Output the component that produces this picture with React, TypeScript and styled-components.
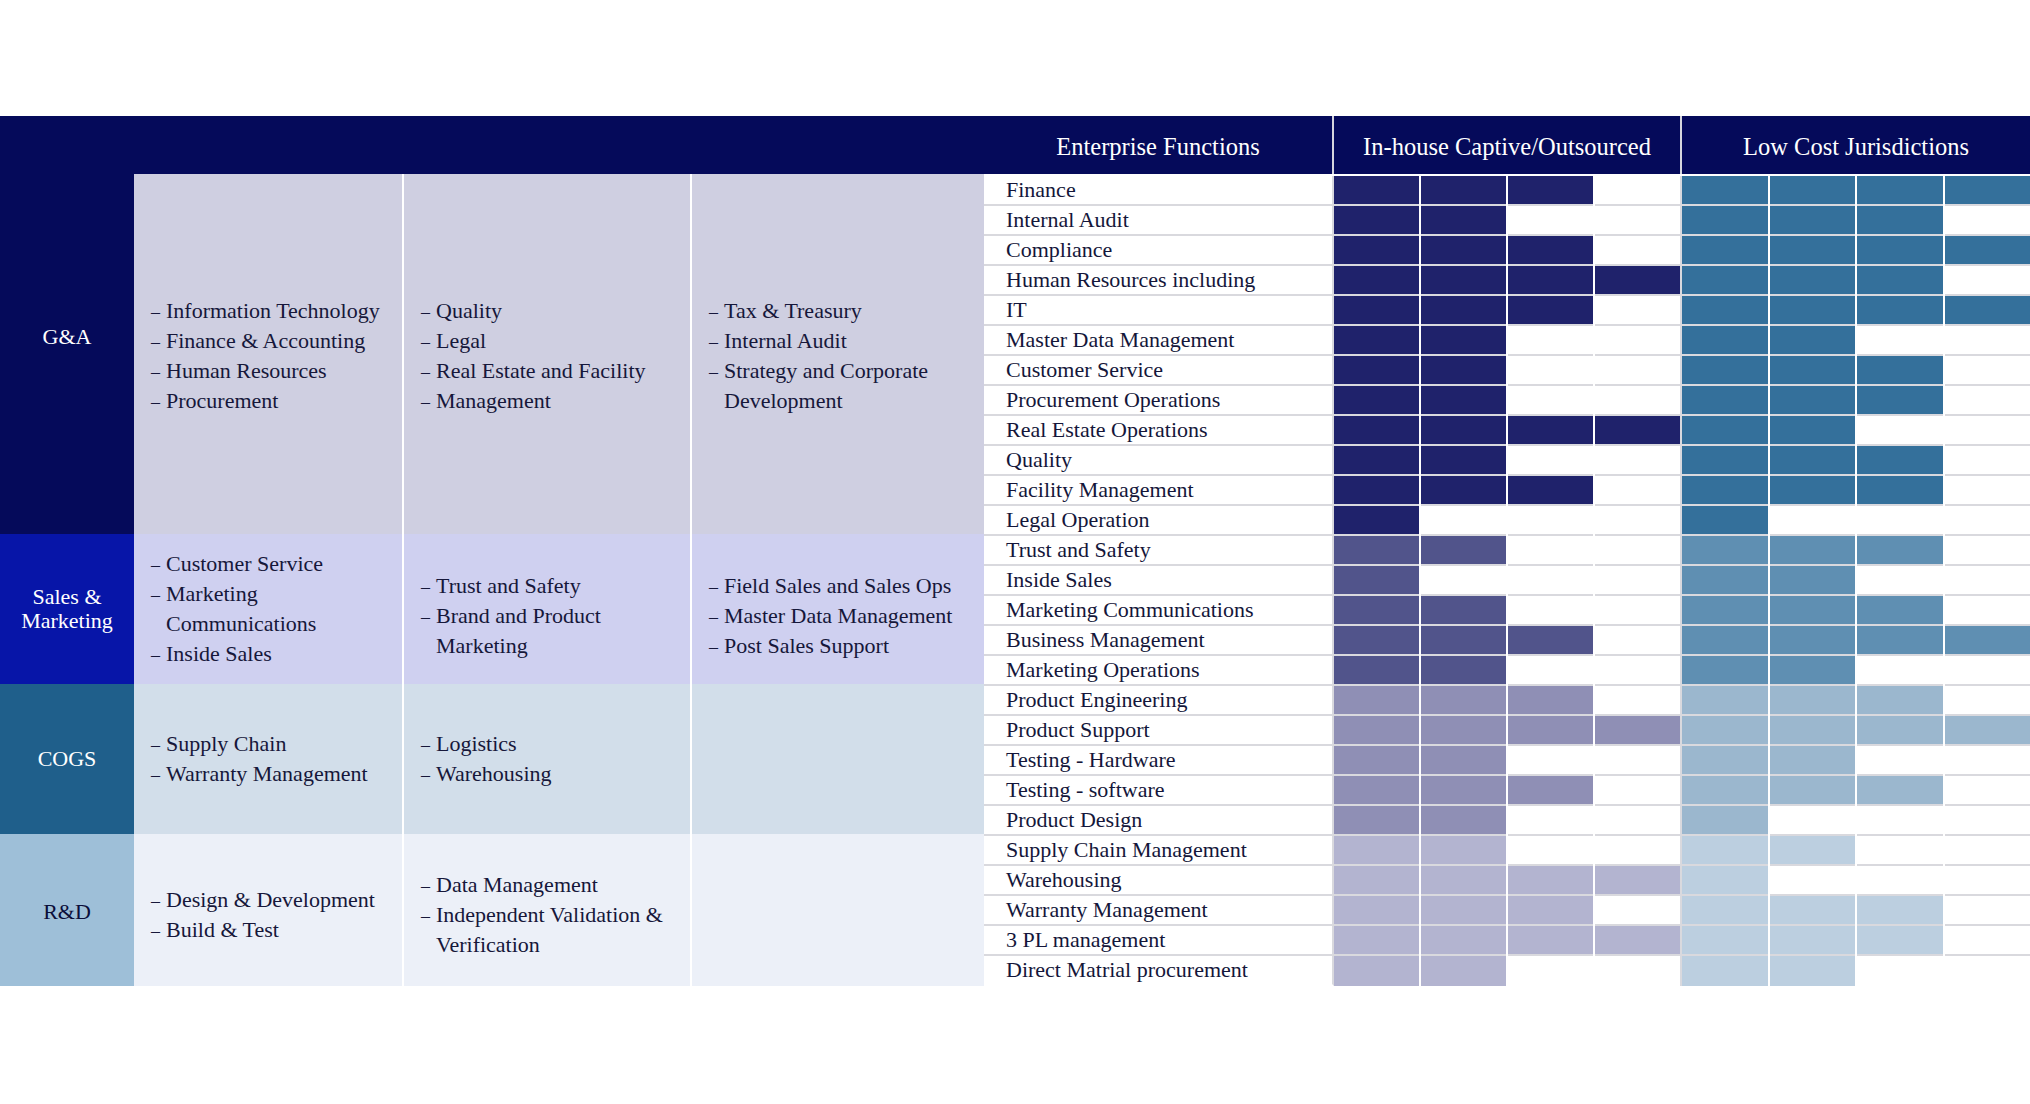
import React from "react";
import styled, { createGlobalStyle } from "styled-components";

const GlobalStyle = createGlobalStyle`
  html, body { margin: 0; padding: 0; background: #ffffff; }
  body { font-family: "Liberation Serif", "Times New Roman", serif; }
  #root { width: 2030px; min-height: 1104px; background: #ffffff; }
  * { box-sizing: border-box; }
`;

type Tier = "ga" | "sm" | "cogs" | "rd";

const NAVY = "#050a5a";
const LINE = "#d9d9de";

const palette: Record<Tier, { label: string; labelText: string; desc: string; inhouse: string; lowcost: string }> = {
  ga: { label: NAVY, labelText: "#ffffff", desc: "#cfcfe1", inhouse: "#1f226b", lowcost: "#34709b" },
  sm: { label: "#0715a8", labelText: "#ffffff", desc: "#cfd0f0", inhouse: "#51548b", lowcost: "#5f8fb2" },
  cogs: { label: "#1f5f8b", labelText: "#ffffff", desc: "#d2deea", inhouse: "#8f8fb5", lowcost: "#9bb7ce" },
  rd: { label: "#9ebfd8", labelText: "#0b0e3a", desc: "#ecf0f8", inhouse: "#b3b4d0", lowcost: "#bccfe0" },
};

interface Section {
  tier: Tier;
  label: string;
  labelShift: number;
  descs: { items: string[]; shift: number }[];
}

const sections: Section[] = [
  {
    tier: "ga",
    label: "G&A",
    labelShift: 24,
    descs: [
      { items: ["Information Technology", "Finance & Accounting", "Human Resources", "Procurement"], shift: 4 },
      { items: ["Quality", "Legal", "Real Estate and Facility", "Management"], shift: 4 },
      { items: ["Tax & Treasury", "Internal Audit", "Strategy and Corporate\nDevelopment"], shift: 4 },
    ],
  },
  {
    tier: "sm",
    label: "Sales &\nMarketing",
    labelShift: 0,
    descs: [
      { items: ["Customer Service", "Marketing\nCommunications", "Inside Sales"], shift: 0 },
      { items: ["Trust and Safety", "Brand and Product\nMarketing"], shift: 14 },
      { items: ["Field Sales and Sales Ops", "Master Data Management", "Post Sales Support"], shift: 14 },
    ],
  },
  {
    tier: "cogs",
    label: "COGS",
    labelShift: 0,
    descs: [
      { items: ["Supply Chain", "Warranty Management"], shift: 0 },
      { items: ["Logistics", "Warehousing"], shift: 0 },
      { items: [], shift: 0 },
    ],
  },
  {
    tier: "rd",
    label: "R&D",
    labelShift: 4,
    descs: [
      { items: ["Design & Development", "Build & Test"], shift: 10 },
      { items: ["Data Management", "Independent Validation &\nVerification"], shift: 10 },
      { items: [], shift: 0 },
    ],
  },
];

const rows: [string, Tier, number, number][] = [
  ["Finance", "ga", 3, 4],
  ["Internal Audit", "ga", 2, 3],
  ["Compliance", "ga", 3, 4],
  ["Human Resources including", "ga", 4, 3],
  ["IT", "ga", 3, 4],
  ["Master Data Management", "ga", 2, 2],
  ["Customer Service", "ga", 2, 3],
  ["Procurement Operations", "ga", 2, 3],
  ["Real Estate Operations", "ga", 4, 2],
  ["Quality", "ga", 2, 3],
  ["Facility Management", "ga", 3, 3],
  ["Legal Operation", "ga", 1, 1],
  ["Trust and Safety", "sm", 2, 3],
  ["Inside Sales", "sm", 1, 2],
  ["Marketing Communications", "sm", 2, 3],
  ["Business Management", "sm", 3, 4],
  ["Marketing Operations", "sm", 2, 2],
  ["Product Engineering", "cogs", 3, 3],
  ["Product Support", "cogs", 4, 4],
  ["Testing - Hardware", "cogs", 2, 2],
  ["Testing - software", "cogs", 3, 3],
  ["Product Design", "cogs", 2, 1],
  ["Supply Chain Management", "rd", 2, 2],
  ["Warehousing", "rd", 4, 1],
  ["Warranty Management", "rd", 3, 3],
  ["3 PL management", "rd", 4, 3],
  ["Direct Matrial procurement", "rd", 2, 2],
];

const Page = styled.div`
  width: 2030px;
  padding-top: 116px;
  display: flex;
  align-items: flex-start;
`;

const LeftPanel = styled.div`
  width: 984px;
  display: grid;
  grid-template-columns: 134px 270px 288px 292px;
  grid-template-rows: 58px 360px 150px 150px 152px;
`;

const SectionLabel = styled.div<{ $tier: Tier; $span: number; $shift: number }>`
  grid-row: span ${(p) => p.$span};
  display: flex;
  align-items: center;
  justify-content: center;
  padding-top: ${(p) => p.$shift}px;
  background: ${(p) => palette[p.$tier].label};
  color: ${(p) => palette[p.$tier].labelText};
  font-size: 22px;
  line-height: 24px;
  text-align: center;
  white-space: pre-line;
`;

const HeaderFill = styled.div`
  grid-column: span 3;
  background: ${NAVY};
`;

const DescCell = styled.div<{ $tier: Tier; $divider: boolean; $shift: number }>`
  background: ${(p) => palette[p.$tier].desc};
  border-right: ${(p) => (p.$divider ? "2px solid #ffffff" : "none")};
  display: flex;
  align-items: center;
  padding: ${(p) => p.$shift}px 8px 0 17px;
`;

const DescList = styled.ul`
  list-style: none;
  margin: 0;
  padding: 0;
  font-size: 22px;
  line-height: 30px;
  color: #16173a;
`;

const DescItem = styled.li`
  display: flex;
  align-items: baseline;
  white-space: pre-line;
`;

const Dash = styled.span`
  flex: none;
  width: 15px;
  font-size: 18px;
  line-height: 20px;
`;

const RightPanel = styled.div`
  width: 1046px;
  display: flex;
  flex-direction: column;
`;

const HeaderRow = styled.div`
  display: grid;
  grid-template-columns: 350px 348px 348px;
  height: 58px;
  background: ${NAVY};
  margin-bottom: 2px;
`;

const HeaderCell = styled.div<{ $divider: boolean }>`
  display: flex;
  align-items: center;
  justify-content: center;
  padding-top: 3px;
  color: #ffffff;
  font-size: 24.5px;
  white-space: nowrap;
  border-right: ${(p) => (p.$divider ? "2px solid #d6d6de" : "none")};
`;

const MatrixRow = styled.div`
  display: grid;
  grid-template-columns: 350px 348px 348px;
  height: 30px;

  &:last-child > * {
    border-bottom-color: transparent;
  }
  &:last-child > * > * {
    border-bottom: none;
  }
`;

const FunctionName = styled.div`
  border-right: 2px solid ${LINE};
  border-bottom: 2px solid ${LINE};
  padding-left: 22px;
  font-size: 22px;
  line-height: 28px;
  color: #14163a;
  white-space: nowrap;
  background: #ffffff;
`;

const Group = styled.div<{ $divider: boolean }>`
  display: grid;
  grid-template-columns: repeat(4, 1fr);
  column-gap: 2px;
  border-right: ${(p) => (p.$divider ? `2px solid ${LINE}` : "none")};
`;

const Cell = styled.div<{ $fill: string | null }>`
  background: ${(p) => p.$fill ?? "#ffffff"};
  border-bottom: 2px solid ${LINE};
`;

const Cells: React.FC<{ count: number; color: string }> = ({ count, color }) => (
  <>
    {[0, 1, 2, 3].map((i) => (
      <Cell key={i} $fill={i < count ? color : null} />
    ))}
  </>
);

export default function App() {
  return (
    <>
      <GlobalStyle />
      <Page>
        <LeftPanel>
          {sections.map((s, si) => (
            <React.Fragment key={s.tier}>
              <SectionLabel $tier={s.tier} $span={si === 0 ? 2 : 1} $shift={s.labelShift}>
                {s.label}
              </SectionLabel>
              {si === 0 && <HeaderFill />}
              {s.descs.map((d, di) => (
                <DescCell key={di} $tier={s.tier} $divider={di < 2} $shift={d.shift}>
                  {d.items.length > 0 && (
                    <DescList>
                      {d.items.map((item) => (
                        <DescItem key={item}>
                          <Dash>–</Dash>
                          <span>{item}</span>
                        </DescItem>
                      ))}
                    </DescList>
                  )}
                </DescCell>
              ))}
            </React.Fragment>
          ))}
        </LeftPanel>
        <RightPanel>
          <HeaderRow>
            <HeaderCell $divider>Enterprise Functions</HeaderCell>
            <HeaderCell $divider>In-house Captive/Outsourced</HeaderCell>
            <HeaderCell $divider={false}>Low Cost Jurisdictions</HeaderCell>
          </HeaderRow>
          {rows.map(([name, tier, ih, lc]) => (
            <MatrixRow key={name}>
              <FunctionName>{name}</FunctionName>
              <Group $divider>
                <Cells count={ih} color={palette[tier].inhouse} />
              </Group>
              <Group $divider={false}>
                <Cells count={lc} color={palette[tier].lowcost} />
              </Group>
            </MatrixRow>
          ))}
        </RightPanel>
      </Page>
    </>
  );
}
